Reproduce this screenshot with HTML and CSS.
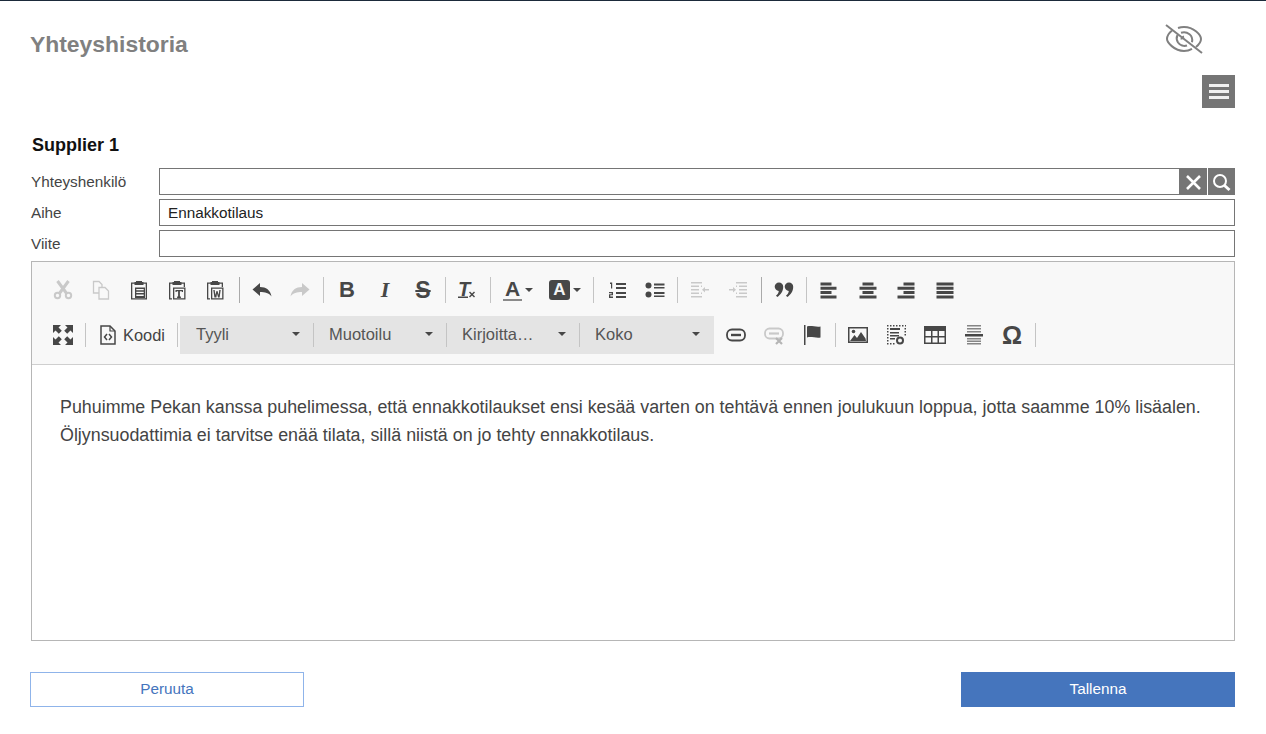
FILE: index.html
```html
<!DOCTYPE html>
<html lang="fi">
<head>
<meta charset="utf-8">
<title>Yhteyshistoria</title>
<link rel="stylesheet" href="styles.css">
</head>
<body>
<div class="topline"></div>
<main class="page">
  <header class="head">
    <h1 class="title">Yhteyshistoria</h1>
    <svg class="eye" width="38" height="30" viewBox="0 0 38 30" fill="none" stroke="#808080" stroke-width="2">
      <path d="M7 6.500C4 9 2 12 2 15c0 3 7 12 17 12 3.500 0 6-1 8-2.200M13 4c2-.7 4-1 6-1 10 0 17 8 17 12 0 2.500-2 5.500-5 8"/>
      <path d="M12.500 11C11.500 13 11.500 16 13 18.500c2 3 6 4 9 3M16 8.800c3-1 6-.5 8.500 1.500 2.500 2 3 5.500 2.500 8"/>
      <path d="M19 12.500c-1.500.5-2.500 1.500-2.500 3"/>
      <path d="M1 1l36 28"/>
    </svg>
  </header>
  <div class="menu-row">
    <button class="menu-btn" type="button" aria-label="Valikko"><span></span><span></span><span></span></button>
  </div>
  <h2 class="supplier">Supplier 1</h2>
  <div class="field">
    <label class="lbl">Yhteyshenkilö</label>
    <input class="inp" type="text">
    <button class="sq" type="button" aria-label="Tyhjennä"><svg width="27" height="25" viewBox="0 0 27 25" fill="none" stroke="#fff" stroke-width="2.600"><path d="M7 6l13 13M20 6L7 19"/></svg></button>
    <button class="sq sq2" type="button" aria-label="Hae"><svg width="27" height="25" viewBox="0 0 27 25" fill="none" stroke="#fff"><circle cx="12" cy="11" r="6" stroke-width="2"/><path d="M16.500 15.500l5 4.500" stroke-width="3"/></svg></button>
  </div>
  <div class="field">
    <label class="lbl">Aihe</label>
    <input class="inp" type="text" value="Ennakkotilaus">
  </div>
  <div class="field">
    <label class="lbl">Viite</label>
    <input class="inp" type="text">
  </div>

  <section class="editor">
    <div class="toolbar">
      <div class="tb-row">
        <span class="b off"><svg class="ic ol" viewBox="0 0 20 20" stroke="currentColor"><circle cx="4.500" cy="15.500" r="2.700" stroke-width="2"/><circle cx="15.500" cy="15.500" r="2.700" stroke-width="2"/><path d="M4.500 1l9.500 13M15.500 1L6 14" stroke-width="3"/></svg></span>
        <span class="b off"><svg class="ic ol" viewBox="0 0 20 20" stroke="currentColor" stroke-width="1.300"><path d="M8 13H2.500V1.500H8l3 3V7"/><path d="M8 7.500h6l3.500 3.500v8H8z"/></svg></span>
        <span class="b"><svg class="ic" viewBox="0 0 20 20"><path d="M6 2.500H2v17h16v-17h-4v1.200h2.700v14.600H3.300V3.700H6z"/><path d="M7 1h6v1h1.500v3h-9V2H7z"/><path d="M6 7.500h10v10.500H6zm1.300 1.500v1.300h7.400V9zm0 2.800v1.300h7.400v-1.300zm0 2.800v1.300h7.400v-1.300z"/></svg></span>
        <span class="b"><svg class="ic" viewBox="0 0 20 20"><path d="M6 2.500H2v17h3v-1.200H3.300V3.700H6zM14 2.500h4v4.500h-1.300V3.700H14z"/><path d="M7 1h6v1h1.500v3h-9V2H7z"/><path d="M6 7.500h12.500v12H6zm1.300 1.300v9.400h9.900V8.800zM8.500 10h7.500v2h-1.200v-.8h-1.900V16.500h1V18h-3.800v-1.500h1v-5.300H9.700v.8H8.500z"/></svg></span>
        <span class="b"><svg class="ic" viewBox="0 0 20 20"><path d="M6 2.500H2v17h3v-1.200H3.300V3.700H6zM14 2.500h4v4.500h-1.300V3.700H14z"/><path d="M7 1h6v1h1.500v3h-9V2H7z"/><path d="M6 7.500h12.500v12H6zm1.300 1.300v9.400h9.900V8.800zM8.300 10h1.400l.6 5 1.200-4h1l1.200 4 .6-5h1.400l-1.100 7.500h-1.500L12 13.500l-.6 4H9.400z"/></svg></span>
        <i class="sep s-a"></i>
        <span class="b"><svg class="ic" viewBox="0 0 20 20"><path d="M.5 9.500L8 3v4c6 0 10.500 3 11.500 9.500C17 13 13 12 8 12v4z"/></svg></span>
        <span class="b off"><svg class="ic" viewBox="0 0 20 20"><path d="M19.500 9.500L12 3v4C6 7 1.500 10 .5 16.500 3 13 7 12 12 12v4z"/></svg></span>
        <i class="sep s-b"></i>
        <span class="b"><span class="g g-b">B</span></span>
        <span class="b"><span class="g g-i">I</span></span>
        <span class="b"><span class="g g-s">S</span></span>
        <i class="sep s-c"></i>
        <span class="b tx"><span class="g g-t">T</span><svg class="mini" width="20" height="20" viewBox="0 0 20 20" fill="currentColor"><path d="M1 16.500h10V18H1z"/><path d="M12 12.500l1-1 2 2 2-2 1 1-2 2 2 2-1 1-2-2-2 2-1-1 2-2z"/></svg></span>
        <i class="sep s-d"></i>
        <span class="b wide"><span class="g g-a">A</span><i class="caret"></i></span>
        <span class="b wide"><span class="hl">A</span><i class="caret"></i></span>
        <i class="sep s-e"></i>
        <span class="b"><svg class="ic" viewBox="0 0 20 20"><path d="M9 3h10v2H9zM9 7h10v2H9zM9 12h10v2H9zM9 16h10v2H9z"/><path d="M3 2.500h2.200v6H4V4H3zM2 12h4v3.200H3.300v1.300H6V18H2v-3.800h2.700V13.300H2z"/></svg></span>
        <span class="b"><svg class="ic" viewBox="0 0 20 20"><circle cx="3.500" cy="5.500" r="3"/><circle cx="3.500" cy="14.500" r="3"/><path d="M9 3.500h10.500v2H9zM9 7h10.500v1.500H9zM9 12h10.500v2H9zM9 15.500h10.500V17H9z"/></svg></span>
        <i class="sep s-f"></i>
        <span class="b off"><svg class="ic" viewBox="0 0 20 20"><path d="M9 2h10v1.500H9zM11 5.500h8V7h-8zM11 9h8v1.500h-8zM11 12.500h8V14h-8zM9 16h10v1.500H9zM1 9h4V7l3 2.800-3 2.800v-2H1zM8 2h1v1.500H8zM8 5.500h1V7H8zM8 12.500h1V14H8zM8 16h1v1.500H8z" transform="matrix(-1 0 0 1 20 0)"/></svg></span>
        <span class="b off"><svg class="ic" viewBox="0 0 20 20"><path d="M9 2h10v1.500H9zM11 5.500h8V7h-8zM11 9h8v1.500h-8zM11 12.500h8V14h-8zM9 16h10v1.500H9zM1 9h4V7l3 2.800-3 2.800v-2H1zM8 2h1v1.500H8zM8 5.500h1V7H8zM8 12.500h1V14H8zM8 16h1v1.500H8z"/></svg></span>
        <i class="sep s-g"></i>
        <span class="b"><svg class="ic" viewBox="0 0 20 20"><path d="M5 2.500a4.200 4.200 0 0 1 4.200 4.200c0 4.500-2.500 8-6 10.300L2 15.500c1.500-1.200 2.500-2.500 2.800-4.600A4.200 4.200 0 0 1 5 2.500zM15 2.500a4.200 4.200 0 0 1 4.200 4.200c0 4.500-2.500 8-6 10.300L12 15.500c1.500-1.200 2.500-2.500 2.800-4.600A4.200 4.200 0 0 1 15 2.500z"/></svg></span>
        <i class="sep s-h"></i>
        <span class="b"><svg class="ic" viewBox="0 0 20 20"><path d="M1.500 2.500h11v3h-11zM1.500 6.800h16v3h-16zM1.500 11.100h11v3h-11zM1.500 15.400h16v3h-16z"/></svg></span>
        <span class="b n-t"><svg class="ic" viewBox="0 0 20 20"><path d="M4.500 2.500h11v3h-11zM1.500 6.800h17v3h-17zM4.500 11.100h11v3h-11zM1.500 15.400h17v3h-17z"/></svg></span>
        <span class="b"><svg class="ic" viewBox="0 0 20 20"><path d="M7.500 2.500h11v3h-11zM1.500 6.800h17v3h-17zM7.500 11.100h11v3h-11zM1.500 15.400h17v3h-17z"/></svg></span>
        <span class="b n-t"><svg class="ic" viewBox="0 0 20 20"><path d="M1.500 2.500h17v3h-17zM1.500 6.800h17v3h-17zM1.500 11.100h17v3h-17zM1.500 15.400h17v3h-17z"/></svg></span>
      </div>
      <div class="tb-row row2">
        <span class="b"><svg class="ic" viewBox="0 0 20 20"><path d="M0 0h8L5.500 2.500 8.800 5.800 5.800 8.800 2.500 5.500 0 8zM20 0h-8l2.500 2.500-3.300 3.300 3 3 3.300-3.300L20 8zM0 20h8l-2.500-2.500 3.300-3.300-3-3-3.300 3.300L0 12zM20 20h-8l2.500-2.500-3.300-3.300 3-3 3.300 3.300L20 12z"/></svg></span>
        <i class="sep s-i"></i>
        <span class="b src"><svg class="ic ol" viewBox="0 0 20 20" stroke="currentColor"><path d="M3 1h9l5 5v13H3z" stroke-width="1.500"/><path d="M12 1v5h5" stroke-width="1.200"/><path d="M9 9l-2.500 3L9 15M11 9l2.500 3L11 15" stroke-width="1.500"/></svg><span class="src-t">Koodi</span></span>
        <i class="sep s-j"></i>
        <div class="combos">
          <span class="combo c-first">Tyyli<i class="caret"></i></span><i class="csep"></i>
          <span class="combo">Muotoilu<i class="caret"></i></span><i class="csep"></i>
          <span class="combo">Kirjoitta…<i class="caret"></i></span><i class="csep"></i>
          <span class="combo c-last">Koko<i class="caret"></i></span>
        </div>
        <span class="b n-l"><svg class="ic ol" viewBox="0 0 20 20" stroke="currentColor" stroke-width="1.800"><rect x="1" y="4.500" width="18" height="11" rx="5"/><path d="M5 10h10" stroke-width="2.400"/></svg></span>
        <span class="b off"><svg class="ic ol" viewBox="0 0 20 20" stroke="currentColor" stroke-width="1.800"><rect x="1" y="3.500" width="18" height="10" rx="4.500"/><path d="M5 8.500h10" stroke-width="2.200"/><path d="M12 13l6 6M18 13l-6 6" stroke="#b5b5b5" stroke-width="2.200"/></svg></span>
        <span class="b"><svg class="ic" viewBox="0 0 20 20"><path d="M2 0h1.500v20H2zM5 1.500c4-1.500 9 1 13.500 0v11c-4.500 1-9.500-1.500-13.500 0z"/></svg></span>
        <i class="sep s-l"></i>
        <span class="b"><svg class="ic" viewBox="0 0 20 20"><path d="M0 2h20v16H0zm1.500 1.500v13h17v-13z"/><path d="M2 16l4.500-6 2.500 3 4-6 4.500 6.500 .5 2.500z"/><circle cx="5.500" cy="6.500" r="1.800"/></svg></span>
        <span class="b"><svg class="ic" viewBox="0 0 20 20"><path d="M4 3h10v2H4zM4 7h9v1.500H4zM4 10h9v1.500H4zM4 13h5v1.500H4z"/><path d="M1 0h1.500v1.500H1zM4 0h1.500v1.500H4zM7 0h1.500v1.500H7zM10 0h1.500v1.500H10zM13 0h1.500v1.500H13zM16 0h1.500v1.500H16zM19 0h1v1.500h-1zM1 3h1.500v1.500H1zM1 6h1.500v1.500H1zM1 9h1.500v1.500H1zM1 12h1.500v1.500H1zM1 15h1.500v1.500H1zM1 18h1.500v1.500H1zM4 18h1.500v1.500H4zM7 18h1.500v1.500H7zM18.500 3h1.500v1.500h-1.500zM18.500 6h1.500v1.500h-1.500zM18.500 9h1.500v1.500h-1.500z"/><path d="M14 11.500a4 4 0 1 1 0 8 4 4 0 0 1 0-8zm0 2a2 2 0 1 0 0 4 2 2 0 0 0 0-4z"/></svg></span>
        <span class="b n-t"><svg class="ic tbl" viewBox="0 0 22 20"><path d="M0 1h22v18H0zm1.500 5v5h5.500V6zm7 0v5h5V6zm6.500 0v5h5.500V6zM1.500 12.500v5h5.500v-5zm7 0v5h5v-5zm6.500 0v5h5.500v-5z"/></svg></span>
        <span class="b n-t"><svg class="ic" viewBox="0 0 20 20"><path d="M3 0h14v1.500H3zM3 3h14v1.500H3zM3 6h14v1.500H3z" opacity=".65"/><path d="M1 9h18v2.500H1z"/><path d="M3 13h14v1.500H3zM3 15.500h14V17H3zM3 18h14v1.500H3z" opacity=".65"/></svg></span>
        <span class="b"><span class="g g-o">Ω</span></span>
        <i class="sep s-m"></i>
      </div>
    </div>
    <div class="content">
      <p>Puhuimme Pekan kanssa puhelimessa, että ennakkotilaukset ensi kesää varten on tehtävä ennen joulukuun loppua, jotta saamme 10% lisäalen.</p>
      <p>Öljynsuodattimia ei tarvitse enää tilata, sillä niistä on jo tehty ennakkotilaus.</p>
    </div>
  </section>

  <footer class="foot">
    <button class="btn cancel" type="button">Peruuta</button>
    <button class="btn save" type="button">Tallenna</button>
  </footer>
</main>
</body>
</html>
```
FILE: styles.css
```css
* { box-sizing: border-box; }
html, body { margin: 0; padding: 0; background: #fff; }
body { font-family: "Liberation Sans", Arial, sans-serif; color: #444; overflow: hidden; }

.topline { height: 1px; background: #1b2a3a; }
.page { padding: 0 31px 0 30px; }

.head { display: flex; justify-content: space-between; align-items: flex-start; height: 74px; padding: 23px 32px 0 0; }
.title { margin: 0; font-size: 22.9px; line-height: 40px; font-weight: 700; color: #808080; }
.eye { display: block; }

.menu-row { display: flex; justify-content: flex-end; }
.menu-btn { width: 33px; height: 33px; padding: 0; border: 0; background: #757575; display: flex; flex-direction: column; align-items: center; justify-content: center; gap: 3px; }
.menu-btn span { display: block; width: 20px; height: 3px; background: #f0f0f0; }

.supplier { margin: 0; padding: 25px 0 11px 2px; font-size: 18px; line-height: 24px; font-weight: 700; color: #111; }

.field { display: flex; height: 27px; margin-bottom: 4px; }
.lbl { width: 129px; padding-left: 1px; font-size: 15.3px; line-height: 28px; color: #444; flex: none; }
.inp { flex: 1; min-width: 0; height: 27px; border: 1px solid #757575; padding: 0 8px; font: 15.3px "Liberation Sans", Arial, sans-serif; color: #222; background: #fff; border-radius: 0; outline: 0; }
.sq { width: 27px; height: 27px; padding: 1px 0 0; border: 0; background: #757575; flex: none; display: block; }
.sq svg { display: block; }
.sq2 { width: 28px; border-left: 1px solid #fff; }

.editor { margin-left: 1px; height: 380px; border: 1px solid #b6b6b6; display: flex; flex-direction: column; }
.toolbar { height: 103px; padding: 12px 0 0 12px; background: #f8f8f8; border-bottom: 1px solid #cfcfcf; flex: none; }
.tb-row { display: flex; align-items: center; height: 32px; color: #444; }
.row2 { height: 38px; margin-top: 10px; }

.b { width: 38px; height: 30px; display: flex; align-items: center; justify-content: center; flex: none; position: relative; color: #474747; }
.b.off { color: #c9c9c9; }
.ic { width: 20px; height: 20px; display: block; fill: currentColor; }
.ic.ol { fill: none; }
.tbl { width: 22px; }
.wide { width: 46px; gap: 3px; justify-content: flex-start; padding-left: 8px; }
.src { width: 86px; justify-content: flex-start; padding-left: 7px; gap: 5px; }
.src-t { font-size: 16.4px; color: #444; }

.sep { display: block; width: 1px; height: 26px; background: #c4c4c4; flex: none; }
.s-a { margin: 0 3px 0 5px; background: #aaa; }
.s-b { margin: 0 4px; }
.s-c { margin: 0 2px 0 3px; }
.s-d { margin: 0 4px; }
.s-e { margin: 0 4px 0 6px; }
.s-f { margin: 0 3px; }
.s-g { margin: 0 3px 0 4px; background: #aaa; }
.s-h { margin: 0 3px; }
.s-i { margin: 0 5px 0 3px; height: 24px; }
.s-j { margin: 0 2px 0 0; height: 24px; }
.s-l { margin: 0 3px 0 4px; height: 24px; }
.s-m { margin: 0 0 0 4px; height: 24px; }
.n-l { margin-left: 3px; }
.n-t { margin-left: 1px; }

.g { display: block; color: #474747; line-height: 20px; }
.g-b { font: 700 22px/20px "Liberation Sans", Arial, sans-serif; }
.g-i { font: italic 700 22px/20px "Liberation Serif", serif; }
.g-s { font: 700 23px/20px "Liberation Sans", Arial, sans-serif; text-decoration: line-through; }
.g-t { font: italic 700 20px/20px "Liberation Sans", Arial, sans-serif; margin-top: -3px; }
.g-a { font: 700 21px/20px "Liberation Sans", Arial, sans-serif; border-bottom: 2px solid #8a8a8a; padding: 0 2px; height: 22px; }
.g-o { font: 700 25px/20px "Liberation Sans", Arial, sans-serif; }
.mini { position: absolute; left: 9px; top: 5px; }
.tx { justify-content: flex-start; padding-left: 10px; }
.hl { display: block; width: 21px; height: 20px; background: #474747; border-radius: 3px; color: #f4f4f4; font: 700 17px/20px "Liberation Sans", Arial, sans-serif; text-align: center; }

.caret { display: block; width: 0; height: 0; border: 4px solid transparent; border-top-color: #474747; border-bottom: 0; flex: none; }

.combos { display: flex; align-items: center; height: 38px; width: 534px; background: #e4e4e4; flex: none; }
.combo { flex: none; width: 132px; height: 38px; display: flex; align-items: center; justify-content: space-between; padding: 0 13px 2px 15px; font-size: 16.5px; color: #555; }
.c-first { width: 133px; padding-left: 16px; }
.c-last { width: 134px; padding-right: 14px; }
.csep { display: block; width: 1px; height: 24px; background: #c4c4c4; flex: none; }

.content { flex: 1; background: #fff; padding: 28px 28px 0; font-size: 17.85px; line-height: 28px; color: #444; }
.content p { margin: 0; }

.foot { display: flex; justify-content: space-between; margin-top: 31px; }
.btn { width: 274px; height: 35px; font: 15.3px "Liberation Sans", Arial, sans-serif; border-radius: 0; padding: 0 0 2px; }
.cancel { background: #fff; color: #4575bd; border: 1px solid #8fb4ea; }
.save { background: #4575bd; color: #fff; border: 0; }
```
